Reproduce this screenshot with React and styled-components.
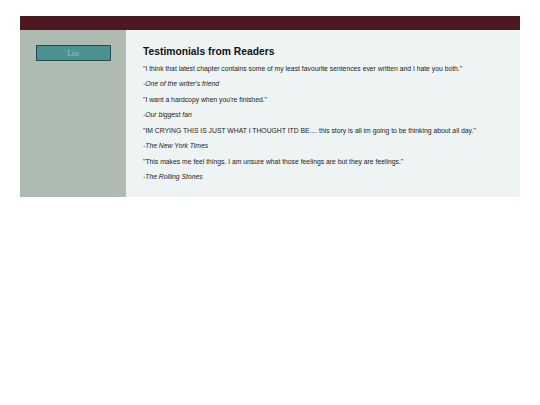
import React from 'react';
import styled, { createGlobalStyle } from 'styled-components';

const GlobalStyle = createGlobalStyle`
  body {
    margin: 0;
    background: #ffffff;
    font-family: "Liberation Sans", Arial, sans-serif;
  }
`;

const Page = styled.div`
  padding: 16px 20px;
`;

const TopBar = styled.div`
  height: 14px;
  background: #4b191e;
`;

const Layout = styled.div`
  display: flex;
`;

const Sidebar = styled.div`
  width: 106px;
  background: #adbbb0;
  display: flex;
  flex-direction: column;
  align-items: center;
  padding-top: 15px;
`;

const NavButton = styled.button`
  width: 75px;
  height: 16px;
  padding: 0;
  background: #4a9190;
  border: 1px solid #2c4c4a;
  color: #9fcfcb;
  font-family: "Liberation Serif", "Times New Roman", serif;
  font-size: 7.5px;
  cursor: pointer;
`;

const Content = styled.div`
  flex: 1;
  background: #eef4f4;
  padding: 15px 17px 12px;
  color: #222222;
`;

const Heading = styled.h2`
  margin: 0 0 1.5px;
  font-size: 10.3px;
  line-height: 14px;
  font-weight: bold;
  color: #111111;
`;

const Quote = styled.p`
  margin: 0;
  font-size: 6.8px;
  line-height: 15.5px;
  font-style: ${(p) => (p.$author ? 'italic' : 'normal')};
`;

const testimonials = [
  {
    text: '"I think that latest chapter contains some of my least favourite sentences ever written and I hate you both."',
    author: "-One of the writer's friend",
  },
  { text: '"I want a hardcopy when you\'re finished."', author: '-Our biggest fan' },
  {
    text: '"IM CRYING THIS IS JUST WHAT I THOUGHT ITD BE.... this story is all im going to be thinking about all day."',
    author: '-The New York Times',
  },
  {
    text: '"This makes me feel things. I am unsure what those feelings are but they are feelings."',
    author: '-The Rolling Stones',
  },
];

const App = () => (
  <>
    <GlobalStyle />
    <Page>
      <TopBar />
      <Layout>
        <Sidebar>
          <NavButton>List</NavButton>
        </Sidebar>
        <Content>
          <Heading>Testimonials from Readers</Heading>
          {testimonials.map((t, i) => (
            <React.Fragment key={i}>
              <Quote>{t.text}</Quote>
              <Quote $author>{t.author}</Quote>
            </React.Fragment>
          ))}
        </Content>
      </Layout>
    </Page>
  </>
);

export default App;
